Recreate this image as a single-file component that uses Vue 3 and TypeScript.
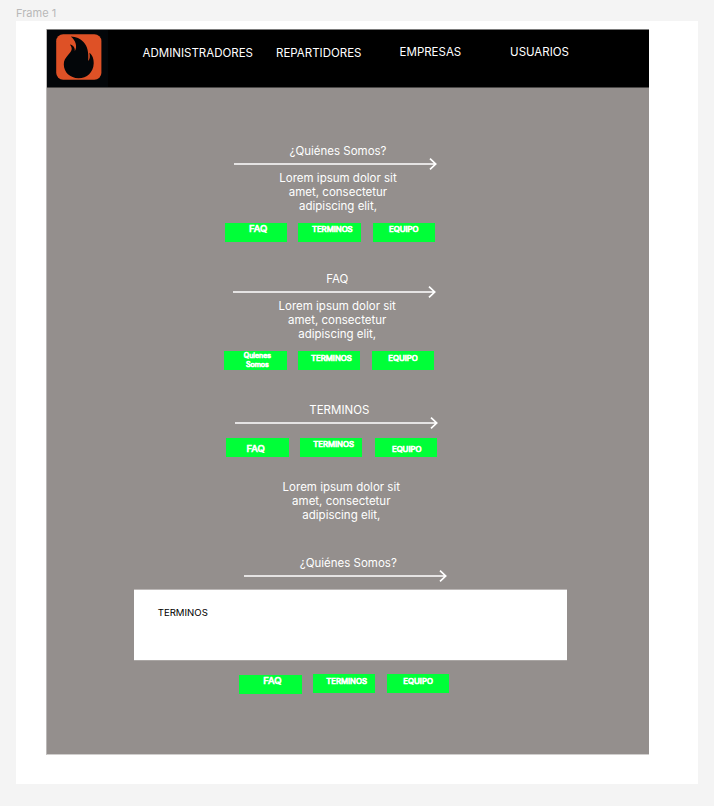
<script setup lang="ts">
interface Action {
  label: string
  kind: string
}

interface Section {
  id: string
  title: string
  text?: string[]
  panel?: string
  actions: Action[]
}

const navItems: Action[] = [
  { label: 'ADMINISTRADORES', kind: 'admins' },
  { label: 'REPARTIDORES', kind: 'couriers' },
  { label: 'EMPRESAS', kind: 'companies' },
  { label: 'USUARIOS', kind: 'users' },
]

const lorem: string[] = ['Lorem ipsum dolor sit', 'amet, consectetur', 'adipiscing elit,']

const faq: Action = { label: 'FAQ', kind: 'faq' }
const about: Action = { label: 'Quienes\nSomos', kind: 'about' }
const terms: Action = { label: 'TERMINOS', kind: 'terms' }
const team: Action = { label: 'EQUIPO', kind: 'team' }

const sections: Section[] = [
  { id: 'who', title: '¿Quiénes Somos?', text: lorem, actions: [faq, terms, team] },
  { id: 'questions', title: 'FAQ', text: lorem, actions: [about, terms, team] },
  { id: 'conditions', title: 'TERMINOS', text: lorem, actions: [faq, terms, team] },
  { id: 'detail', title: '¿Quiénes Somos?', panel: 'TERMINOS', actions: [faq, terms, team] },
]
</script>

<template>
  <div class="canvas">
    <div class="frame-label">Frame 1</div>
    <div class="frame">
      <div class="page">
        <header class="header">
          <div class="logo">
            <svg width="46" height="46" viewBox="0 0 46 46">
              <rect x="0.2" y="0.2" width="45.2" height="45.6" rx="7" fill="#de5126" />
              <path
                d="M14.8 2.6C20 2.9 24.5 4.8 27.5 8C31.5 12.2 32.8 18 32.2 27C33.8 25.5 34.2 22.5 33.4 18.8C36.8 21.5 37.8 25.5 37.7 29.5C37.4 38.5 31 44.2 22.5 44.2C14 44.2 7.8 38 7.8 30.5C7.8 23 14.6 20.2 15.6 15.8C16 13.6 15.2 12 13.8 10.4C17.3 11.2 19.2 13.4 18.8 17.2C21.8 12.5 19.5 6.5 14.8 2.6Z"
                fill="#030609"
              />
            </svg>
          </div>
          <nav class="nav">
            <a v-for="item in navItems" :key="item.kind" :class="item.kind">{{ item.label }}</a>
          </nav>
        </header>

        <main class="content">
          <section v-for="s in sections" :key="s.id" class="section" :class="s.id">
            <h2 class="title">{{ s.title }}</h2>
            <svg class="arrow" width="204" height="14" viewBox="0 0 204 14">
              <path d="M0 7H201.5M196 1.6L201.7 7L196 12.4" fill="none" stroke="#fff" stroke-width="1.7" />
            </svg>
            <p v-if="s.text" class="text">
              <span v-for="line in s.text" :key="line">{{ line }}</span>
            </p>
            <div v-if="s.panel" class="panel">{{ s.panel }}</div>
            <div class="actions">
              <a v-for="a in s.actions" :key="a.kind" class="action" :class="a.kind">{{ a.label }}</a>
            </div>
          </section>
        </main>
      </div>
    </div>
  </div>
</template>

<style>
body {
  background: #f4f4f4;
}
</style>

<style scoped>
.canvas {
  box-sizing: border-box;
  width: 714px;
  height: 806px;
  padding: 6px 16px 22px;
  overflow: hidden;
  background: #f4f4f4;
  font-family: Inter, "Liberation Sans", sans-serif;
  font-size: 11.5px;
  line-height: 14px;
}

.frame-label {
  height: 15px;
  color: #b8b8b8;
  font-size: 11px;
  line-height: 15px;
}

.frame {
  box-sizing: border-box;
  width: 682px;
  height: 763px;
  padding: 8px 0 0 30px;
  background: #fff;
}

.page {
  box-sizing: border-box;
  width: 603px;
  height: 726px;
  border-bottom: 1px solid #d0cecd;
  border-left: 1px solid #bbb8b7;
  background: #948f8d;
}

.header {
  box-sizing: border-box;
  display: flex;
  height: 59px;
  margin-left: -0.5px;
  border-top: 1px solid #7c7c7c;
  border-bottom: 1px solid #4a4847;
  background: #000;
}

.logo {
  box-sizing: border-box;
  width: 61px;
  padding: 4px 0 0 9.5px;
  background: #030609;
}

.nav {
  display: flex;
  color: #fff;
}

.nav a {
  padding-top: 16px;
  white-space: nowrap;
}

.admins {
  width: 133.4px;
  margin-left: 35.1px;
}

.couriers {
  width: 123.6px;
}

.nav .companies {
  width: 110.5px;
  padding-top: 15px;
}

.nav .users {
  padding-top: 15px;
}

.content {
  display: flex;
  flex-direction: column;
  padding-top: 56px;
}

.section {
  display: flex;
  flex-direction: column;
  width: 226px;
  height: 128.3px;
  margin-left: 178px;
  color: #fff;
}

.title {
  margin: 0;
  font-size: inherit;
  font-weight: 400;
  text-align: center;
}

.arrow {
  flex: none;
  margin: -1px 0 0 8.7px;
}

.text {
  display: flex;
  flex-direction: column;
  margin: -0.3px 0 0;
  text-align: center;
}

.actions {
  display: flex;
  gap: 11px;
  margin-top: 10.3px;
}

.action {
  box-sizing: border-box;
  flex: none;
  width: 62.4px;
  height: 19px;
  padding-top: 1px;
  background: #00ff38;
  color: #fff;
  font-size: 7.8px;
  line-height: 11px;
  white-space: pre-line;
  -webkit-text-stroke: 0.7px #fff;
}

.faq {
  padding-top: 0;
  padding-left: 24px;
  font-size: 9.5px;
}

.terms {
  padding-left: 13.5px;
}

.team {
  margin-left: 0.9px;
  padding-left: 16.4px;
}

.about {
  padding: 0 0 0 4px;
  font-size: 7px;
  line-height: 9px;
  text-align: center;
}

.questions {
  height: 131px;
  margin-left: 177.2px;
}

.questions .terms,
.questions .team {
  padding-top: 2px;
}

.conditions {
  height: 152.7px;
  margin-left: 179.3px;
}

.conditions .actions {
  order: 1;
  margin-top: 7.7px;
}

.conditions .text {
  order: 2;
  width: 230px;
  margin-top: 23px;
}

.conditions .faq {
  padding-top: 5px;
  padding-left: 20.3px;
}

.conditions .team {
  margin-left: 1.9px;
  padding-top: 6px;
  padding-left: 17px;
}

.detail {
  height: auto;
  margin-left: 192.3px;
}

.detail .title {
  width: 218px;
}

.detail .arrow {
  margin-left: 5.2px;
}

.panel {
  box-sizing: border-box;
  width: 433px;
  height: 72px;
  margin: 6px 0 0 -105.3px;
  padding: 16px 23.7px;
  border-top: 1px solid #bcb8b7;
  border-bottom: 1px solid #a9a5a3;
  background: #fff;
  color: #000;
  font-size: 9.6px;
}

.detail .actions {
  margin-top: 13.3px;
}

.detail .faq {
  height: 18.6px;
  margin-top: 0.8px;
}

.detail .terms,
.detail .team {
  padding-top: 2px;
}
</style>
